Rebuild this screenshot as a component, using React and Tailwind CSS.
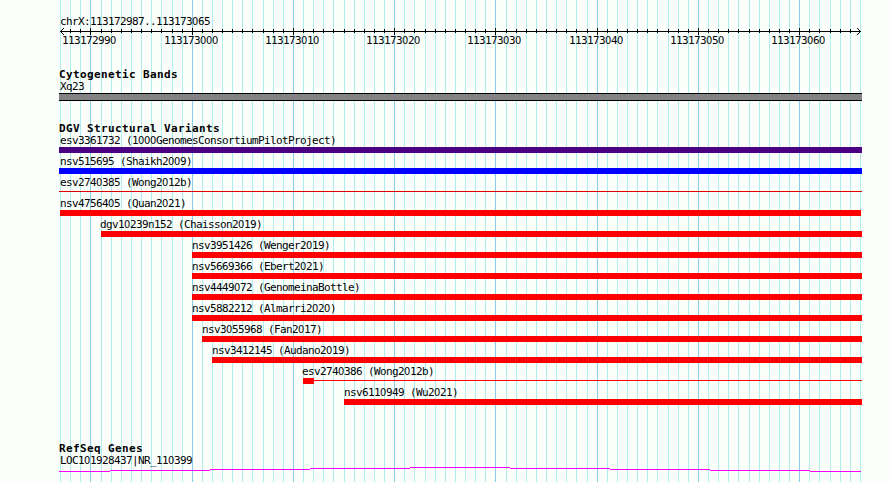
import React from "react";

const START = 113172987;
const COUNT = 80;
// One base is 10px wide, with an extra pixel at these offsets.
const WIDE = [4, 11, 20, 28, 36, 44, 52, 60, 68, 76];
const tickX = (i) => 60 + i * 10 + WIDE.filter((w) => w <= i).length;
const ticks = Array.from({ length: COUNT }, (_, i) => ({
  x: tickX(i),
  pos: START + i,
  major: (START + i) % 10 === 0,
}));

const variants = [
  { name: "esv3361732 (1000GenomesConsortiumPilotProject)", x: 59, color: "bg-[#4b0082]" },
  { name: "nsv515695 (Shaikh2009)", x: 59, color: "bg-[#0000ff]" },
  { name: "esv2740385 (Wong2012b)", x: 59, thin: true, dark: true },
  { name: "nsv4756405 (Quan2021)", x: 60, end: 861, color: "bg-[#ff0000]" },
  { name: "dgv10239n152 (Chaisson2019)", x: 101, color: "bg-[#ff0000]" },
  { name: "nsv3951426 (Wenger2019)", x: 192, color: "bg-[#ff0000]" },
  { name: "nsv5669366 (Ebert2021)", x: 192, color: "bg-[#ff0000]" },
  { name: "nsv4449072 (GenomeinaBottle)", x: 192, color: "bg-[#ff0000]" },
  { name: "nsv5882212 (Almarri2020)", x: 192, color: "bg-[#ff0000]" },
  { name: "nsv3055968 (Fan2017)", x: 202, color: "bg-[#ff0000]" },
  { name: "nsv3412145 (Audano2019)", x: 212, color: "bg-[#ff0000]" },
  { name: "esv2740386 (Wong2012b)", x: 303, thin: true, block: true },
  { name: "nsv6110949 (Wu2021)", x: 344, color: "bg-[#ff0000]" },
];

const geneSteps = [
  [59, 110, 471], [110, 210, 470], [210, 310, 469], [310, 410, 468], [410, 510, 467],
  [510, 610, 468], [610, 710, 469], [710, 810, 470], [810, 861, 471],
];

// Fixed 6px-pitch label; the zeros use an open glyph without the inner dot.
function Label({ children }) {
  return (
    <span className="block whitespace-pre font-['DejaVu_Sans_Mono',monospace] text-[11px] leading-[12px] tracking-[-0.622px] text-black">
      {children.split(/(0)/).map((part, i) =>
        part === "0" ? (
          <span key={i} className="font-['DejaVu_Sans_Condensed','DejaVu_Sans',sans-serif] [font-stretch:condensed] tracking-[-0.298px]">0</span>
        ) : (
          part
        )
      )}
    </span>
  );
}

function Title({ children }) {
  return (
    <h2 className="h-[12px] pl-[59px] whitespace-pre font-['DejaVu_Sans_Mono',monospace] text-[11px] font-bold leading-[14px] tracking-[0.378px] text-black">
      {children}
    </h2>
  );
}

function Backdrop() {
  return (
    <svg className="absolute inset-0" width="890" height="482" shapeRendering="crispEdges">
      {ticks.map((t) => (
        <rect key={t.pos} x={t.x} y="0" width="1" height="482" fill={t.major ? "#87ceeb" : "#afeeee"} />
      ))}
    </svg>
  );
}

function Ruler() {
  return (
    <svg className="block" width="890" height="9" shapeRendering="crispEdges">
      <rect x="60" y="4" width="801" height="1" />
      {ticks.slice(1, -1).map((t) => (
        <rect key={t.pos} x={t.x} y={t.major ? 1 : 2} width="1" height={t.major ? 7 : 4} />
      ))}
      {[1, 2, 3].map((d) => (
        <g key={d}>
          <rect x={60 + d} y={4 - d} width="1" height="1" />
          <rect x={60 + d} y={4 + d} width="1" height="1" />
          <rect x={860 - d} y={4 - d} width="1" height="1" />
          <rect x={860 - d} y={4 + d} width="1" height="1" />
        </g>
      ))}
    </svg>
  );
}

function Variant({ v }) {
  const width = (v.end || 862) - v.x;
  const labelX = Math.max(60, v.x === 101 ? 100 : v.x - (v.block ? 1 : 0));
  return (
    <div className="flex h-[21px] flex-col">
      <div className="h-[13px] pt-px" style={{ paddingLeft: labelX }}>
        <Label>{v.name}</Label>
      </div>
      <div className="flex h-[6px] items-start" style={{ marginLeft: v.x, width }}>
        {v.block && <div className="h-[6px] w-[11px] bg-[#ff0000]" />}
        {v.thin ? (
          <div className={v.dark ? "mt-[2px] h-px flex-1 bg-[#e00000]" : "mt-[2px] h-px flex-1 bg-[#ff0000]"} />
        ) : (
          <div className={`h-[6px] flex-1 ${v.color}`} />
        )}
      </div>
    </div>
  );
}

export default function App() {
  return (
    <div className="relative h-[482px] w-[890px] overflow-hidden bg-[#fcfefc]">
      <Backdrop />
      <main className="relative flex flex-col">
        <div className="h-[27px] pl-[60px] pt-[16px]">
          <Label>chrX:113172987..113173065</Label>
        </div>
        <Ruler />
        <div className="-mt-px flex h-[13px] pl-[62px]">
          {ticks.filter((t) => t.major).map((t, i, all) => (
            <div key={t.pos} className="shrink-0" style={{ width: i < all.length - 1 ? all[i + 1].x - t.x : 60 }}>
              <Label>{String(t.pos)}</Label>
            </div>
          ))}
        </div>

        <section className="pt-[20px]">
          <Title>Cytogenetic Bands</Title>
          <div className="h-[13px] pl-[60px] pt-px">
            <Label>Xq23</Label>
          </div>
          <div className="ml-[59px] h-[8px] w-[803px] border-y border-black bg-[#848284]" />
        </section>

        <section className="pt-[21px]">
          <Title>DGV Structural Variants</Title>
          {variants.map((v) => (
            <Variant key={v.name} v={v} />
          ))}
        </section>

        <section className="pt-[35px]">
          <Title>RefSeq Genes</Title>
          <div className="h-[13px] pl-[60px] pt-px">
            <Label>LOC101928437|NR_110399</Label>
          </div>
          <svg className="block" width="890" height="15" viewBox="0 467 890 15" shapeRendering="crispEdges">
            {geneSteps.map(([a, b, y]) => (
              <rect key={a} x={a} y={y} width={b - a} height="1" fill="#ff00ff" />
            ))}
          </svg>
        </section>
      </main>
    </div>
  );
}
